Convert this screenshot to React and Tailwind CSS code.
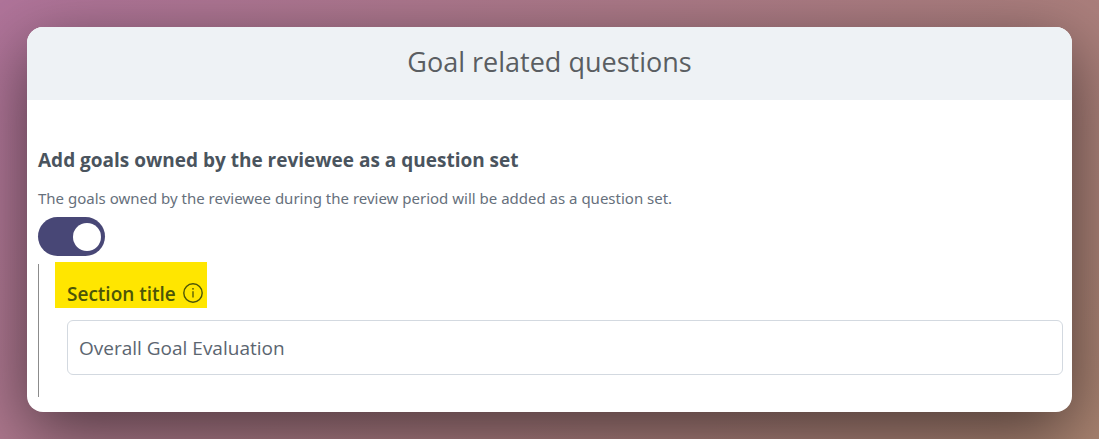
import React, { useState } from 'react';

function InfoIcon() {
  return (
    <svg
      viewBox="0 0 20 20"
      className="w-5 h-5 mb-[5px] shrink-0"
      fill="none"
      stroke="currentColor"
      aria-hidden="true"
    >
      <circle cx="10" cy="10" r="9.2" strokeWidth="1.4" />
      <path d="M10 8.2v6.4" strokeWidth="1.3" />
      <circle cx="10" cy="5.8" r="0.9" fill="currentColor" stroke="none" />
    </svg>
  );
}

function App() {
  const [enabled, setEnabled] = useState(true);
  const [title, setTitle] = useState('Overall Goal Evaluation');

  return (
    <div className="min-h-screen overflow-hidden p-[27px] bg-linear-[135deg] from-[#b0749a] to-[#a98370] font-['Open_Sans',sans-serif]">
      <main className="bg-white rounded-2xl shadow-[0_20px_68px_rgba(0,0,0,0.55)]">
        {/* Header */}
        <header className="h-[73px] pb-1 flex items-center justify-center rounded-t-2xl bg-[#eef2f5]">
          <h1 className="text-[27px] leading-8 text-[#5a5e62]">Goal related questions</h1>
        </header>

        <div className="pt-12 pl-[11px] pr-[9px] pb-[15px]">
          {/* Toggle */}
          <h2 className="text-[19px] leading-6 font-bold text-[#4a545e]">
            <label htmlFor="add-goals">Add goals owned by the reviewee as a question set</label>
          </h2>
          <p className="mt-4 font-['Noto_Sans',sans-serif] text-[15px] leading-5 text-[#66707c]">
            The goals owned by the reviewee during the review period will be added as a question set.
          </p>
          <input
            id="add-goals"
            type="checkbox"
            role="switch"
            checked={enabled}
            onChange={(e) => setEnabled(e.target.checked)}
            className="mt-[9px] flex items-center w-[67px] h-[39px] px-1 appearance-none rounded-full cursor-pointer bg-gray-400 checked:bg-[#484776] checked:justify-end before:size-7 before:rounded-full before:bg-white"
          />

          {/* Section title */}
          {enabled && (
            <div className="mt-2 flow-root pl-4 pb-[22px] border-l border-[#8c8c8c]">
              <label
                htmlFor="section-title"
                className="-mt-0.5 w-[152px] h-[46px] pl-3 flex items-end gap-[7px] bg-[#ffe600] text-[19px] leading-7 font-semibold text-[#4c5508]"
              >
                Section title
                <InfoIcon />
              </label>
              <div className="mt-3 pl-3">
                <input
                  id="section-title"
                  type="text"
                  value={title}
                  onChange={(e) => setTitle(e.target.value)}
                  className="block w-full h-[55px] px-[11px] border border-[#d3d9e0] rounded-md text-[19px] leading-6 text-[#5b6570] outline-none focus:border-[#484776]"
                />
              </div>
            </div>
          )}
        </div>
      </main>
    </div>
  );
}

export default App;
